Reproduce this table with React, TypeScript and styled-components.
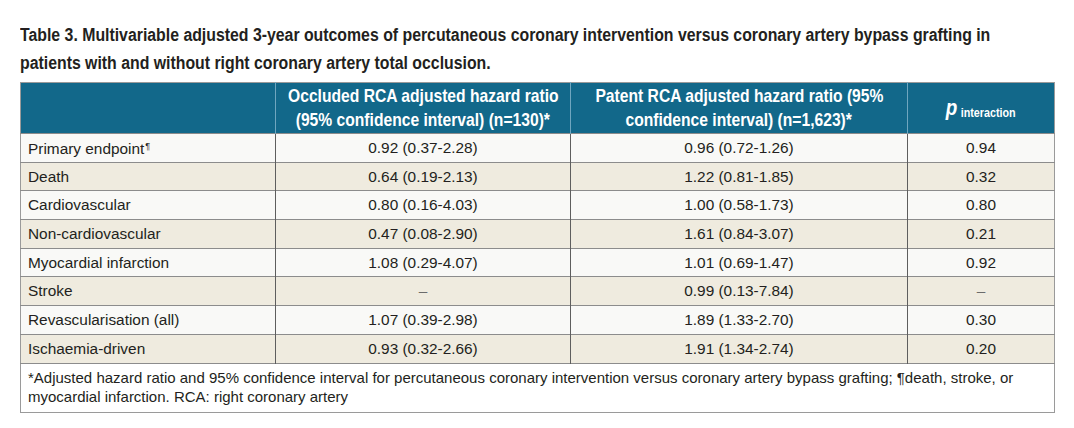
import React from 'react';
import styled, { createGlobalStyle } from 'styled-components';

const GlobalStyle = createGlobalStyle`
  body {
    margin: 0;
    background-color: #ffffff;
  }
`;

const Page = styled.div`
  padding: 21px 20px 0 20px;
  width: 1034px;
`;

/* no narrow face is installed, so bold Arial metrics are squeezed horizontally */
const Condensed = styled.span<{ $origin?: string; $scale?: number }>`
  display: inline-block;
  white-space: nowrap;
  transform: scaleX(${(p) => p.$scale ?? 0.86});
  transform-origin: ${(p) => p.$origin ?? 'center'};
`;

const Caption = styled.div`
  font-family: 'Liberation Sans', Arial, sans-serif;
  font-weight: 700;
  font-size: 17.6px;
  line-height: 28px;
  color: #231f20;
  margin-bottom: 6px;
  white-space: nowrap;
`;

const CaptionLine = styled.div`
  height: 27.5px;
`;

const Table = styled.table`
  width: 1034px;
  table-layout: fixed;
  border-collapse: collapse;
  border: 1px solid #9a9a9a;
  font-family: 'Liberation Sans', Arial, sans-serif;
  color: #231f20;
`;

const HeadRow = styled.tr`
  background-color: #12688a;
  height: 51px;
`;

const HeadCell = styled.th`
  padding: 0 4px;
  font-family: 'Liberation Sans', Arial, sans-serif;
  font-weight: 700;
  font-size: 18.2px;
  line-height: 24px;
  color: #ffffff;
  text-align: center;
  vertical-align: middle;
  border-left: 1px solid #6fa6bf;

  &:first-child {
    border-left: none;
  }
`;

const HeadLine = styled.div`
  display: flex;
  justify-content: center;
  align-items: baseline;
  height: 24px;
`;

const PItalic = styled.span`
  font-style: italic;
  font-size: 22px;
`;

const PSub = styled.span`
  font-size: 12.5px;
  margin-left: 4px;
  position: relative;
  top: 2px;
`;

const Row = styled.tr<{ $alt: boolean }>`
  height: 28.7px;
  background-color: ${(p) => (p.$alt ? '#efebdf' : '#f9f9f7')};
  border-top: 1px solid #8c8c8c;
`;

const Cell = styled.td<{ $label?: boolean }>`
  padding: 0 ${(p) => (p.$label ? '7px' : '4px')};
  font-size: 15.4px;
  line-height: 20px;
  text-align: ${(p) => (p.$label ? 'left' : 'center')};
  vertical-align: middle;
  border-left: 1px solid #5e5e5e;
  white-space: nowrap;

  &:first-child {
    border-left: none;
  }
`;

const Dash = styled.span`
  color: #6b6b6b;
`;

const Pilcrow = styled.span`
  font-size: 9px;
  vertical-align: 5px;
  margin-left: 1px;
`;

const FootRow = styled.tr`
  background-color: #ffffff;
  border-top: 1px solid #8c8c8c;
`;

const FootCell = styled.td`
  padding: 4px 7px 5px 7px;
  font-size: 15px;
  line-height: 19.5px;
  text-align: left;
  white-space: nowrap;
`;

type Outcome = {
  label: string;
  mark?: boolean;
  occluded: string | null;
  patent: string;
  p: string | null;
};

const outcomes: Outcome[] = [
  { label: 'Primary endpoint', mark: true, occluded: '0.92 (0.37-2.28)', patent: '0.96 (0.72-1.26)', p: '0.94' },
  { label: 'Death', occluded: '0.64 (0.19-2.13)', patent: '1.22 (0.81-1.85)', p: '0.32' },
  { label: 'Cardiovascular', occluded: '0.80 (0.16-4.03)', patent: '1.00 (0.58-1.73)', p: '0.80' },
  { label: 'Non-cardiovascular', occluded: '0.47 (0.08-2.90)', patent: '1.61 (0.84-3.07)', p: '0.21' },
  { label: 'Myocardial infarction', occluded: '1.08 (0.29-4.07)', patent: '1.01 (0.69-1.47)', p: '0.92' },
  { label: 'Stroke', occluded: null, patent: '0.99 (0.13-7.84)', p: null },
  { label: 'Revascularisation (all)', occluded: '1.07 (0.39-2.98)', patent: '1.89 (1.33-2.70)', p: '0.30' },
  { label: 'Ischaemia-driven', occluded: '0.93 (0.32-2.66)', patent: '1.91 (1.34-2.74)', p: '0.20' },
];

const value = (v: string | null) => (v === null ? <Dash>–</Dash> : v);

const App = () => {
  return (
    <Page>
      <GlobalStyle />
      <Caption>
        <CaptionLine>
          <Condensed $origin="left" $scale={0.9}>
            Table 3. Multivariable adjusted 3-year outcomes of percutaneous coronary intervention versus coronary artery bypass grafting in
          </Condensed>
        </CaptionLine>
        <CaptionLine>
          <Condensed $origin="left" $scale={0.9}>
            patients with and without right coronary artery total occlusion.
          </Condensed>
        </CaptionLine>
      </Caption>
      <Table>
        <colgroup>
          <col style={{ width: 255 }} />
          <col style={{ width: 295 }} />
          <col style={{ width: 337 }} />
          <col style={{ width: 147 }} />
        </colgroup>
        <thead>
          <HeadRow>
            <HeadCell />
            <HeadCell>
              <HeadLine>
                <Condensed>Occluded RCA adjusted hazard ratio</Condensed>
              </HeadLine>
              <HeadLine>
                <Condensed>(95% confidence interval) (n=130)*</Condensed>
              </HeadLine>
            </HeadCell>
            <HeadCell>
              <HeadLine>
                <Condensed>Patent RCA adjusted hazard ratio (95%</Condensed>
              </HeadLine>
              <HeadLine>
                <Condensed>confidence interval) (n=1,623)*</Condensed>
              </HeadLine>
            </HeadCell>
            <HeadCell>
              <HeadLine>
                <Condensed>
                  <PItalic>p</PItalic>
                  <PSub>interaction</PSub>
                </Condensed>
              </HeadLine>
            </HeadCell>
          </HeadRow>
        </thead>
        <tbody>
          {outcomes.map((o, i) => (
            <Row key={o.label} $alt={i % 2 === 1}>
              <Cell $label>
                {o.label}
                {o.mark && <Pilcrow>¶</Pilcrow>}
              </Cell>
              <Cell>{value(o.occluded)}</Cell>
              <Cell>{o.patent}</Cell>
              <Cell>{value(o.p)}</Cell>
            </Row>
          ))}
          <FootRow>
            <FootCell colSpan={4}>
              *Adjusted hazard ratio and 95% confidence interval for percutaneous coronary intervention versus coronary artery bypass grafting; ¶death, stroke, or
              <br />
              myocardial infarction. RCA: right coronary artery
            </FootCell>
          </FootRow>
        </tbody>
      </Table>
    </Page>
  );
};

export default App;
